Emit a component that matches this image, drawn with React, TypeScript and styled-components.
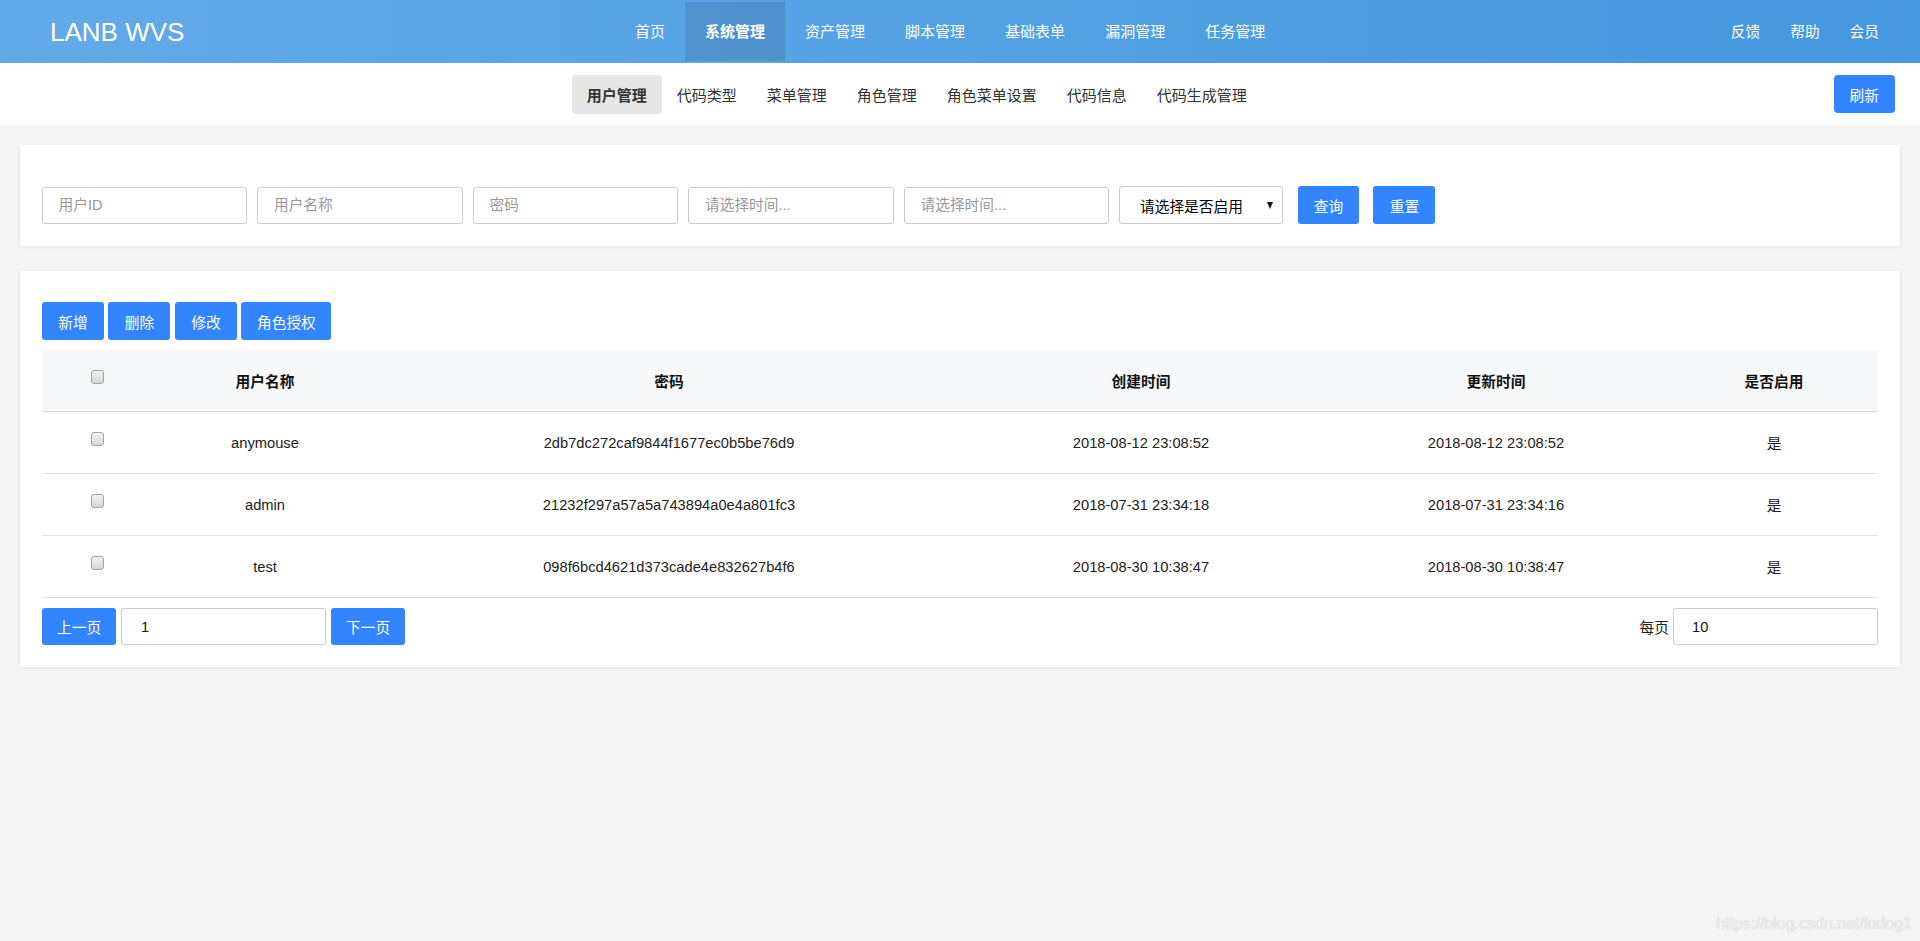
import React from 'react';
import styled, { createGlobalStyle } from 'styled-components';

const FONT = `"Liberation Sans", Arial, "Noto Sans CJK SC", sans-serif`;

const GlobalStyle = createGlobalStyle`
  html, body { margin: 0; padding: 0; background: #f4f4f4; }
  body { font-family: ${FONT}; font-size: 14.7px; color: #333; }
  *, *::before, *::after { box-sizing: border-box; }
  input, button { font: inherit; }
`;

const Page = styled.div`
  position: relative;
  min-height: 100vh;
  background: #f4f4f4;
`;

const Header = styled.header`
  display: flex;
  align-items: center;
  height: 63px;
  padding: 0 26px 0 50px;
  background: linear-gradient(to right, #63aae8, #4597df);
  color: #fff;
`;

const Logo = styled.div`
  font-size: 26px;
  line-height: 1;
  white-space: nowrap;
  color: #fff;
`;

const MainNav = styled.nav`
  flex: 1;
  display: flex;
  justify-content: center;
  align-items: center;
`;

const NavItem = styled.a<{ $active?: boolean }>`
  display: flex;
  align-items: center;
  height: 59px;
  padding: 0 20px 2px;
  font-size: 15px;
  color: #fff;
  text-decoration: none;
  white-space: nowrap;
  font-weight: ${(p) => (p.$active ? 700 : 400)};
  background: ${(p) => (p.$active ? 'rgba(0,0,0,0.1)' : 'transparent')};
`;

const SideLinks = styled.div`
  display: flex;
  align-items: center;
  padding-bottom: 2px;
`;

const SideLink = styled.a`
  padding: 0 15px;
  color: #fff;
  text-decoration: none;
  white-space: nowrap;
`;

const SubBar = styled.div`
  display: flex;
  align-items: center;
  height: 62px;
  padding-right: 25px;
  background: #fff;
`;

const Tabs = styled.div`
  flex: 1;
  display: flex;
  justify-content: center;
`;

const Tab = styled.a<{ $active?: boolean }>`
  display: flex;
  align-items: center;
  height: 39px;
  padding: 0 15px;
  border-radius: 4px;
  font-size: 15px;
  color: #333;
  text-decoration: none;
  white-space: nowrap;
  font-weight: ${(p) => (p.$active ? 700 : 400)};
  background: ${(p) => (p.$active ? '#e6e6e6' : 'transparent')};
`;

const BlueButton = styled.button<{ $h?: number; $px?: number; $r?: number }>`
  height: ${(p) => p.$h ?? 38}px;
  padding: 0 ${(p) => p.$px ?? 16.3}px;
  border: none;
  border-radius: ${(p) => p.$r ?? 3}px;
  background: #3385ff;
  color: #fff;
  white-space: nowrap;
  cursor: pointer;
`;

const Content = styled.main`
  padding: 20px;
`;

const Card = styled.section`
  background: #fff;
  box-shadow: 0 1px 4px rgba(0, 0, 0, 0.08);
`;

const SearchCard = styled(Card)`
  display: flex;
  align-items: center;
  padding: 41px 22px 22px 21.5px;
`;

const TextInput = styled.input<{ $w?: number; $pl?: number }>`
  width: ${(p) => p.$w ?? 205.5}px;
  height: 37px;
  padding: 0 10px 0 ${(p) => p.$pl ?? 16}px;
  border: 1px solid #c9c9d0;
  border-radius: 3px;
  background: #fff;
  color: #111;
  outline: none;
  &::placeholder { color: #999; }
`;

const SearchInput = styled(TextInput)`
  margin-right: 10px;
`;

const FakeSelect = styled.div`
  display: flex;
  align-items: center;
  justify-content: space-between;
  width: 164px;
  height: 38px;
  padding: 0 9px 0 20px;
  margin-right: 14.5px;
  border: 1px solid #c9c9d0;
  border-radius: 3px;
  color: #000;
  white-space: nowrap;
`;

const Caret = styled.span`
  width: 0;
  height: 0;
  border-left: 3.5px solid transparent;
  border-right: 3.5px solid transparent;
  border-top: 7px solid #111;
`;

const ButtonGroup = styled.div<{ $gap: number }>`
  display: flex;
  gap: ${(p) => p.$gap}px;
`;

const TableCard = styled(Card)`
  margin-top: 25px;
  padding: 31px 22px 22px;
`;

const DataTable = styled.table`
  width: 100%;
  margin-top: 10px;
  border-collapse: separate;
  border-spacing: 0;
  table-layout: fixed;
`;

const Th = styled.th`
  height: 62px;
  padding: 0;
  background: #f7f8fa;
  border-bottom: 1px solid #dcdcdc;
  font-weight: 700;
  color: #111;
  text-align: center;
  vertical-align: middle;
`;

const Td = styled.td`
  height: 62px;
  padding: 0;
  border-bottom: 1px solid #e2e2e2;
  color: #222;
  text-align: center;
  vertical-align: middle;
  white-space: nowrap;
`;

const CheckBox = styled.span`
  display: block;
  width: 13px;
  height: 14px;
  margin: 0 auto 7px;
  border: 1px solid #a3a3a3;
  border-radius: 3px;
  background: linear-gradient(#f2f2f2, #d6d6d6);
`;

const Pager = styled.div`
  display: flex;
  justify-content: space-between;
  align-items: center;
  margin-top: 10px;
`;

const PagerGroup = styled.div`
  display: flex;
  align-items: center;
  gap: 5px;
`;

const PerPage = styled.div`
  display: flex;
  align-items: center;
  gap: 4px;
  color: #222;
`;

const Watermark = styled.div`
  position: absolute;
  right: 8px;
  bottom: 9px;
  font-size: 16px;
  line-height: 16px;
  color: #efefef;
  text-shadow: 0 0 1px #bdbdbd;
  pointer-events: none;
`;

const navItems = ['首页', '系统管理', '资产管理', '脚本管理', '基础表单', '漏洞管理', '任务管理'];
const tabs = ['用户管理', '代码类型', '菜单管理', '角色管理', '角色菜单设置', '代码信息', '代码生成管理'];
const colWidths = [110, 226, 582, 362, 348, 208];
const headers = ['用户名称', '密码', '创建时间', '更新时间', '是否启用'];
const rows = [
  ['anymouse', '2db7dc272caf9844f1677ec0b5be76d9', '2018-08-12 23:08:52', '2018-08-12 23:08:52', '是'],
  ['admin', '21232f297a57a5a743894a0e4a801fc3', '2018-07-31 23:34:18', '2018-07-31 23:34:16', '是'],
  ['test', '098f6bcd4621d373cade4e832627b4f6', '2018-08-30 10:38:47', '2018-08-30 10:38:47', '是'],
];

export default function App() {
  return (
    <Page>
      <GlobalStyle />
      <Header>
        <Logo>LANB WVS</Logo>
        <MainNav>
          {navItems.map((n) => (
            <NavItem key={n} $active={n === '系统管理'}>{n}</NavItem>
          ))}
        </MainNav>
        <SideLinks>
          <SideLink>反馈</SideLink>
          <SideLink>帮助</SideLink>
          <SideLink>会员</SideLink>
        </SideLinks>
      </Header>
      <SubBar>
        <Tabs>
          {tabs.map((t) => (
            <Tab key={t} $active={t === '用户管理'}>{t}</Tab>
          ))}
        </Tabs>
        <BlueButton $px={16} $r={4}>刷新</BlueButton>
      </SubBar>
      <Content>
        <SearchCard>
          <SearchInput placeholder="用户ID" />
          <SearchInput placeholder="用户名称" />
          <SearchInput placeholder="密码" />
          <SearchInput placeholder="请选择时间..." />
          <SearchInput placeholder="请选择时间..." />
          <FakeSelect>
            <span>请选择是否启用</span>
            <Caret />
          </FakeSelect>
          <ButtonGroup $gap={14}>
            <BlueButton>查询</BlueButton>
            <BlueButton>重置</BlueButton>
          </ButtonGroup>
        </SearchCard>
        <TableCard>
          <ButtonGroup $gap={4.5}>
            <BlueButton>新增</BlueButton>
            <BlueButton>删除</BlueButton>
            <BlueButton>修改</BlueButton>
            <BlueButton $px={15.6}>角色授权</BlueButton>
          </ButtonGroup>
          <DataTable>
            <colgroup>
              {colWidths.map((w, i) => (
                <col key={i} style={{ width: w }} />
              ))}
            </colgroup>
            <thead>
              <tr>
                <Th><CheckBox /></Th>
                {headers.map((h) => (
                  <Th key={h}>{h}</Th>
                ))}
              </tr>
            </thead>
            <tbody>
              {rows.map((r) => (
                <tr key={r[0]}>
                  <Td><CheckBox /></Td>
                  {r.map((c, i) => (
                    <Td key={i}>{c}</Td>
                  ))}
                </tr>
              ))}
            </tbody>
          </DataTable>
          <Pager>
            <PagerGroup>
              <BlueButton $h={37} $px={15}>上一页</BlueButton>
              <TextInput $w={205} $pl={19} defaultValue="1" />
              <BlueButton $h={37} $px={15}>下一页</BlueButton>
            </PagerGroup>
            <PerPage>
              <span>每页</span>
              <TextInput $w={205} $pl={18} defaultValue="10" />
            </PerPage>
          </Pager>
        </TableCard>
      </Content>
      <Watermark>https://blog.csdn.net/lodog1</Watermark>
    </Page>
  );
}
